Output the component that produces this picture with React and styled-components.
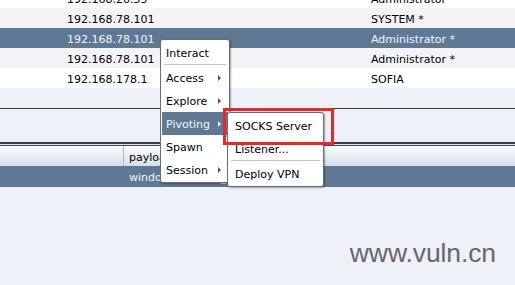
import React from 'react';
import styled, { createGlobalStyle } from 'styled-components';

const GlobalStyle = createGlobalStyle`
  html, body {
    margin: 0;
    padding: 0;
    background: #eef1f8;
    overflow: hidden;
  }
  body {
    font-family: "DejaVu Sans", Verdana, sans-serif;
    font-size: 11px;
    color: #000;
  }
`;

const Selected = '#5e7996';
const PaneBg = '#eef1f8';

const Page = styled.div`
  position: relative;
  width: 515px;
  height: 285px;
  overflow: hidden;
  display: flex;
  flex-direction: column;
  background: ${PaneBg};
`;

const TopPane = styled.div`
  height: 108px;
  overflow: hidden;
  background: ${PaneBg};
`;

const Table = styled.div`
  display: flex;
  flex-direction: column;
  margin-top: ${({ $scroll }) => -$scroll}px;
`;

const Row = styled.div`
  display: grid;
  grid-template-columns: ${({ $cols }) => $cols};
  height: 20px;
  background: ${({ $variant }) =>
    $variant === 'selected' ? Selected : $variant === 'alt' ? '#f4f4f7' : '#ffffff'};
  color: ${({ $variant }) => ($variant === 'selected' ? '#f4f6fa' : '#000')};
`;

const Cell = styled.div`
  box-sizing: border-box;
  height: 20px;
  padding: 2px 0 0 5px;
  line-height: 19px;
  white-space: nowrap;
  overflow: hidden;
`;

const Rule = styled.div`
  height: ${({ $h }) => $h}px;
  background: ${({ $color }) => $color};
  flex-shrink: 0;
`;

const MiddlePane = styled.div`
  height: 33px;
  background: ${PaneBg};
`;

const BottomPane = styled.div`
  flex: 1;
  background: ${PaneBg};
`;

const HeaderRow = styled.div`
  display: grid;
  grid-template-columns: 124px 1fr;
  height: 20px;
  background: linear-gradient(#fbfcfe, #d6dfeb);
`;

const HeaderCell = styled(Cell)`
  border-right: ${({ $divider }) => ($divider ? '1px solid #a9b9cc' : 'none')};
  color: #000;
`;

const Menu = styled.div`
  position: absolute;
  top: ${({ $top }) => $top}px;
  left: ${({ $left }) => $left}px;
  width: ${({ $width }) => $width}px;
  box-sizing: border-box;
  padding: 1px;
  background: #ffffff;
  border: 1px solid #6c6c6c;
  border-radius: 3px;
  box-shadow: 1px 1px 2px rgba(0, 0, 0, 0.35);
  z-index: ${({ $z }) => $z};
`;

const MenuItem = styled.div`
  display: flex;
  align-items: center;
  justify-content: space-between;
  box-sizing: border-box;
  height: 23px;
  padding: 2px 7px 0 ${({ $indent }) => $indent}px;
  line-height: 21px;
  white-space: nowrap;
  background: ${({ $active }) => ($active ? Selected : 'transparent')};
  color: ${({ $active }) => ($active ? '#f4f6fa' : '#000')};
`;

const Arrow = styled.span`
  width: 0;
  height: 0;
  margin-top: -2px;
  border-top: 3px solid transparent;
  border-bottom: 3px solid transparent;
  border-left: 3px solid ${({ $active }) => ($active ? '#e8ecf2' : '#555')};
`;

const Separator = styled.div`
  height: 1px;
  margin: 0 2px;
  background: #c4c4c4;
  border-bottom: 1px solid #ffffff;
`;

const Callout = styled.div`
  position: absolute;
  left: 223px;
  top: 108px;
  width: 111px;
  height: 37px;
  box-sizing: border-box;
  border: 3px solid #e8262c;
  z-index: 5;
`;

const Watermark = styled.div`
  position: absolute;
  right: 19px;
  top: 238px;
  font-family: "Liberation Sans", Arial, sans-serif;
  font-size: 26.5px;
  color: #6b6468;
  letter-spacing: -0.1px;
`;

const hosts = [
  { ip: '192.168.20.55', user: 'Administrator', variant: 'plain' },
  { ip: '192.168.78.101', user: 'SYSTEM *', variant: 'alt' },
  { ip: '192.168.78.101', user: 'Administrator *', variant: 'selected' },
  { ip: '192.168.78.101', user: 'Administrator *', variant: 'alt' },
  { ip: '192.168.178.1', user: 'SOFIA', variant: 'plain' },
];

const mainItems = [
  { label: 'Interact' },
  { sep: true },
  { label: 'Access', sub: true },
  { label: 'Explore', sub: true },
  { label: 'Pivoting', sub: true, active: true },
  { label: 'Spawn' },
  { label: 'Session', sub: true },
];

const pivotItems = [
  { label: 'SOCKS Server' },
  { label: 'Listener...' },
  { sep: true },
  { label: 'Deploy VPN' },
];

const renderItems = (items, indent) =>
  items.map((item, i) =>
    item.sep ? (
      <Separator key={i} />
    ) : (
      <MenuItem key={i} $active={item.active} $indent={indent}>
        <span>{item.label}</span>
        {item.sub && <Arrow $active={item.active} />}
      </MenuItem>
    )
  );

export default function App() {
  return (
    <>
      <GlobalStyle />
      <Page>
        <TopPane>
          <Table $scroll={12}>
            {hosts.map((h, i) => (
              <Row key={i} $cols="62px 304px 1fr" $variant={h.variant}>
                <Cell />
                <Cell>{h.ip}</Cell>
                <Cell>{h.user}</Cell>
              </Row>
            ))}
          </Table>
        </TopPane>
        <Rule $h={1} $color="#3b3b3b" />
        <MiddlePane />
        <Rule $h={2} $color="#34404f" />
        <Rule $h={1} $color="#dfe5ee" />
        <Rule $h={1} $color="#4a4a4a" />
        <BottomPane>
          <HeaderRow>
            <HeaderCell $divider />
            <HeaderCell>payload</HeaderCell>
          </HeaderRow>
          <Row $cols="124px 1fr" $variant="selected" style={{ height: 21 }}>
            <Cell />
            <Cell>windows/beacon_http/reverse_http</Cell>
          </Row>
        </BottomPane>

        <Menu $top={39} $left={160} $width={70} $z={2}>
          {renderItems(mainItems, 4)}
        </Menu>
        <Menu $top={112} $left={227} $width={97} $z={3}>
          {renderItems(pivotItems, 6)}
        </Menu>
        <Callout />
        <Watermark>www.vuln.cn</Watermark>
      </Page>
    </>
  );
}
